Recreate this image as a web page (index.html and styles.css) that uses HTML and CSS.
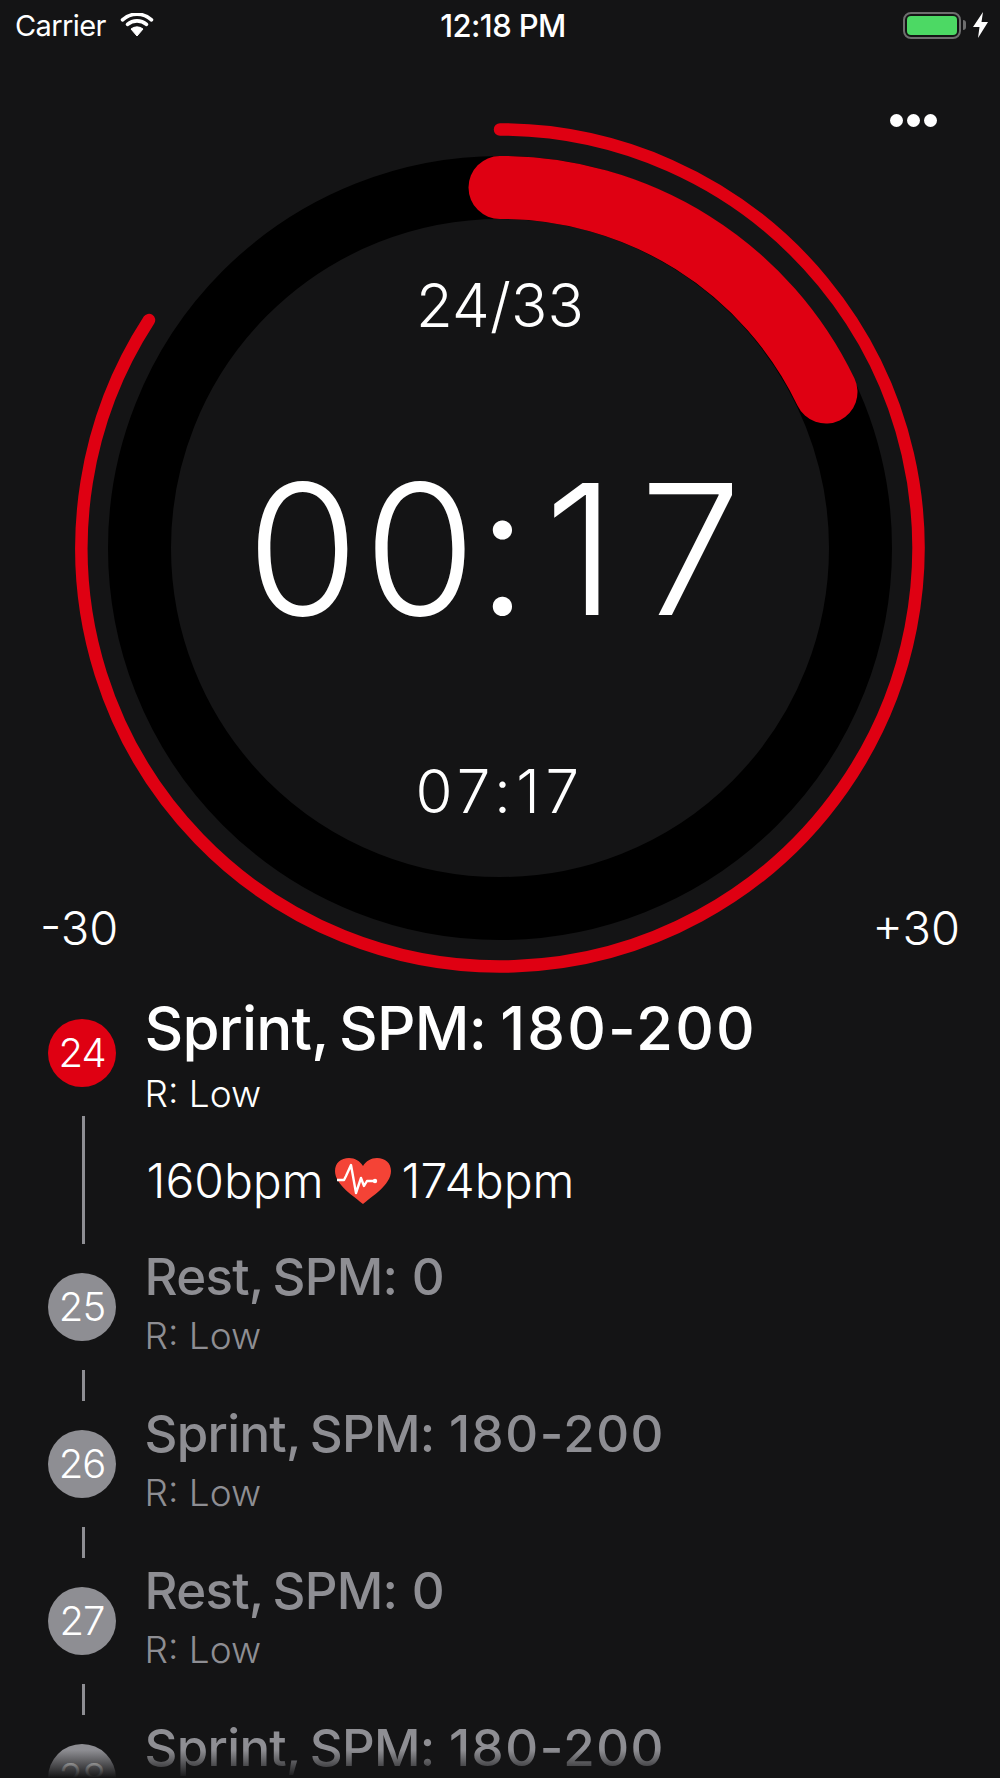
FILE: index.html
```html
<!DOCTYPE html>
<html lang="en">
  <head>
    <meta charset="UTF-8" />
    <meta name="viewport" content="width=device-width, initial-scale=1.0" />
    <title>Workout</title>
    <link rel="stylesheet" href="styles.css">
  </head>
  <body>
    <div class="screen">
      <div class="status-bar">
        <div class="status-left">
          <span class="carrier">Carrier</span>
          <svg class="wifi" width="34" height="24" viewBox="0 0 34 24">
            <path d="M17 23 L11 16 A9.5 9.5 0 0 1 23 16 Z" fill="#fff" stroke="#fff" stroke-linejoin="round" />
            <path d="M7.5 11.4 A14.5 14.5 0 0 1 26.5 11.4" fill="none" stroke="#fff" stroke-width="3.6" stroke-linecap="round" />
            <path d="M2.5 6.8 A21.5 21.5 0 0 1 31.5 6.8" fill="none" stroke="#fff" stroke-width="3.6" stroke-linecap="round" />
          </svg>
        </div>
        <span class="clock">12:18 PM</span>
        <div class="status-right">
          <div class="battery"><div class="battery-fill"></div></div>
          <div class="battery-nub"></div>
          <svg class="bolt" width="15" height="26" viewBox="0 0 15 26">
            <polygon points="10,0 0,15 6.5,15 5,26 15,10 8.5,10" fill="#fff" />
          </svg>
        </div>
      </div>

      <div class="dial">
        <svg class="dial-rings" width="1000" height="936" viewBox="0 56 1000 936">
          <circle cx="500" cy="548" r="360.5" fill="none" stroke="#000" stroke-width="63" />
          <path d="M500 187.5 A360.5 360.5 0 0 1 826 392" fill="none" stroke="#df0012" stroke-width="63" stroke-linecap="round" />
          <path d="M500 129.5 A418.5 418.5 0 1 1 149 320" fill="none" stroke="#df0012" stroke-width="12.5" stroke-linecap="round" />
        </svg>
        <div class="menu-row">
          <div class="menu-dots"><i></i><i></i><i></i></div>
        </div>
        <div class="counter">24/33</div>
        <div class="countdown"><span class="cd-mins">00</span><span class="cd-colon">:</span><span class="cd-secs">17</span></div>
        <div class="elapsed">07:17</div>
        <div class="adjust-row">
          <span>-30</span>
          <span>+30</span>
        </div>
      </div>

      <div class="steps">
        <div class="step step-current">
          <div class="rail">
            <div class="badge">24</div>
            <div class="rail-line"></div>
          </div>
          <div class="step-body">
            <div class="step-title">Sprint, SPM: <span class="range">180-200</span></div>
            <div class="step-sub">R: Low</div>
            <div class="bpm">
              <span>160bpm</span>
              <svg class="heart" width="56" height="46" viewBox="0 0 56 46">
                <path d="M28 46 C20 39 0 27 0 13 C0 5 6 0 14 0 C20 0 25 3 28 8 C31 3 36 0 42 0 C50 0 56 5 56 13 C56 27 36 39 28 46 Z" fill="#f44336" />
                <polyline points="2,22 9,22 11,18 16,7 21,35 26,20 29,28 32,23 40,23" fill="none" stroke="#fff" stroke-width="2.4" stroke-linejoin="round" />
                <circle cx="40" cy="23" r="2.2" fill="#fff" />
              </svg>
              <span>174bpm</span>
            </div>
          </div>
        </div>

        <div class="step">
          <div class="rail">
            <div class="badge">25</div>
            <div class="rail-line"></div>
          </div>
          <div class="step-body">
            <div class="step-title">Rest, SPM: <span class="range">0</span></div>
            <div class="step-sub">R: Low</div>
          </div>
        </div>

        <div class="step">
          <div class="rail">
            <div class="badge">26</div>
            <div class="rail-line"></div>
          </div>
          <div class="step-body">
            <div class="step-title">Sprint, SPM: <span class="range">180-200</span></div>
            <div class="step-sub">R: Low</div>
          </div>
        </div>

        <div class="step">
          <div class="rail">
            <div class="badge">27</div>
            <div class="rail-line"></div>
          </div>
          <div class="step-body">
            <div class="step-title">Rest, SPM: <span class="range">0</span></div>
            <div class="step-sub">R: Low</div>
          </div>
        </div>

        <div class="step">
          <div class="rail">
            <div class="badge">28</div>
            <div class="rail-line"></div>
          </div>
          <div class="step-body">
            <div class="step-title">Sprint, SPM: <span class="range">180-200</span></div>
            <div class="step-sub">R: Low</div>
          </div>
        </div>
      </div>

      <div class="bottom-fade"></div>
    </div>
  </body>
</html>
```

FILE: styles.css
```css
* {
  box-sizing: border-box;
}
html,
body {
  margin: 0;
  background: #141415;
}
.screen {
  position: relative;
  width: 1000px;
  height: 1778px;
  overflow: hidden;
  background: #141415;
  color: #fff;
  font-family: Inter, "Liberation Sans", sans-serif;
}

/* status bar */
.status-bar {
  height: 56px;
  padding: 0 6px 6px 15px;
  display: grid;
  grid-template-columns: 1fr auto 1fr;
  align-items: center;
}
.status-left {
  display: flex;
  align-items: center;
  gap: 14px;
}
.carrier {
  font-size: 29px;
  letter-spacing: -0.6px;
}
.clock {
  font-size: 31px;
  font-weight: 500;
  letter-spacing: -0.6px;
  margin-left: -3px;
}
.status-right {
  display: flex;
  align-items: center;
  justify-content: flex-end;
  padding-right: 6px;
}
.battery {
  width: 58px;
  height: 27px;
  padding: 2px;
  border: 2.5px solid #6e6e6e;
  border-radius: 8px;
}
.battery-fill {
  height: 100%;
  background: #4cd964;
  border-radius: 4px;
}
.battery-nub {
  width: 3px;
  height: 10px;
  margin-left: 2px;
  background: #6e6e6e;
  border-radius: 0 4px 4px 0;
}
.bolt {
  margin-left: 7px;
}

/* dial */
.dial {
  position: relative;
  height: 936px;
}
.dial-rings {
  position: absolute;
  top: 0;
  left: 0;
}
.menu-row,
.counter,
.countdown,
.elapsed,
.adjust-row {
  position: relative;
}
.menu-row {
  padding: 58px 63px 0 0;
  display: flex;
  justify-content: flex-end;
}
.menu-dots {
  display: flex;
  gap: 4px;
}
.menu-dots i {
  width: 13px;
  height: 13px;
  border-radius: 50%;
  background: #fff;
}
.counter,
.elapsed {
  text-align: center;
  font-size: 60px;
  line-height: 72px;
  font-weight: 260;
}
.counter {
  margin-top: 142px;
  letter-spacing: 0.2px;
}
.countdown {
  margin-top: 108px;
  padding-left: 12px;
  text-align: center;
  font-size: 182px;
  line-height: 200px;
  font-weight: 280;
}
.cd-mins {
  letter-spacing: 5px;
}
.cd-colon {
  margin-left: -4.5px;
  letter-spacing: 16px;
}
.cd-secs {
  letter-spacing: 24px;
}
.elapsed {
  margin-top: 106px;
  letter-spacing: 5.5px;
}
.adjust-row {
  margin-top: 73px;
  padding: 0 40px;
  display: flex;
  justify-content: space-between;
  font-size: 47px;
  line-height: 56px;
  font-weight: 300;
}

/* step list */
.steps {
  padding-left: 48px;
}
.step {
  display: flex;
  gap: 28.5px;
  color: #8e8e93;
}
.step-current {
  color: #fff;
}
.rail {
  width: 68px;
  flex: none;
  padding-top: 27px;
  display: flex;
  flex-direction: column;
  align-items: center;
}
.badge {
  width: 68px;
  height: 68px;
  flex: none;
  border-radius: 50%;
  background: #8e8e93;
  color: #fff;
  font-size: 40px;
  line-height: 68px;
  text-align: center;
  font-weight: 300;
  letter-spacing: -1px;
}
.step-current .badge {
  background: #df0012;
}
.rail-line {
  width: 2.5px;
  height: 31px;
  margin: 29px 0 2px 2.5px;
  background: #8e8e93;
}
.step-current .rail-line {
  height: 128px;
}
.step-body {
  min-width: 0;
}
.step-title {
  font-size: 51px;
  line-height: 62px;
  font-weight: 500;
  white-space: nowrap;
  letter-spacing: -0.7px;
  word-spacing: -3.5px;
}
.range {
  margin-left: 5px;
  letter-spacing: 1.5px;
}
.step-current .step-title {
  font-size: 60px;
  line-height: 72px;
  letter-spacing: -0.8px;
  word-spacing: -4px;
}
.step-current .range {
  margin-left: 3px;
  letter-spacing: 2.1px;
}
.step-sub {
  margin-top: 6px;
  font-size: 37px;
  line-height: 44px;
  font-weight: 300;
}
.step-current .step-sub {
  margin-top: 8px;
  font-weight: 350;
}
.bpm {
  margin-top: 37px;
  margin-left: 2px;
  display: flex;
  align-items: center;
  gap: 11px;
  font-size: 48px;
  line-height: 56px;
  font-weight: 350;
}

/* list fades out at the bottom edge */
.bottom-fade {
  position: absolute;
  left: 0;
  right: 0;
  bottom: 0;
  height: 28px;
  background: linear-gradient(to bottom, rgba(20, 20, 21, 0), #141415);
}
```
